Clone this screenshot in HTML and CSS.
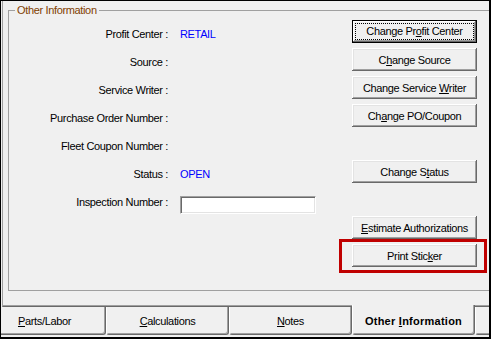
FILE: index.html
```html
<!DOCTYPE html>
<html lang="en">
<head>
  <meta charset="UTF-8">
  <title>Other Information</title>
  <link rel="stylesheet" href="styles.css">
</head>
<body>
  <div class="window">
    <!-- tab page -->
    <div class="page">
      <fieldset class="group">
        <legend>Other Information</legend>
        <div class="form">
          <div class="label">Profit Center :</div>
          <div class="value">RETAIL</div>
          <div class="cell"><button class="btn btn-focus"><span class="focus-ring">Change Pr<u>o</u>fit Center</span></button></div>

          <div class="label">Source :</div>
          <div class="value"></div>
          <div class="cell"><button class="btn">C<u>h</u>ange Source</button></div>

          <div class="label">Service Writer :</div>
          <div class="value"></div>
          <div class="cell"><button class="btn">Change Service <u>W</u>riter</button></div>

          <div class="label">Purchase Order Number :</div>
          <div class="value"></div>
          <div class="cell"><button class="btn">Ch<u>a</u>nge PO/Coupon</button></div>

          <div class="label">Fleet Coupon Number :</div>
          <div class="value"></div>
          <div class="cell"></div>

          <div class="label">Status :</div>
          <div class="value">OPEN</div>
          <div class="cell"><button class="btn">Change S<u>t</u>atus</button></div>

          <div class="label">Inspection Number :</div>
          <div class="value"><input type="text" class="field"></div>
          <div class="cell"></div>

          <div class="label"></div>
          <div class="value"></div>
          <div class="cell"><button class="btn"><u>E</u>stimate Authorizations</button></div>

          <div class="label"></div>
          <div class="value"></div>
          <div class="cell highlight">
            <button class="btn">Print Stic<u>k</u>er</button>
            <div class="callout"></div>
          </div>
        </div>
      </fieldset>
    </div>

    <!-- tabs along the bottom -->
    <div class="tabs">
      <div class="tab"><u>P</u>arts/Labor</div>
      <div class="tab"><u>C</u>alculations</div>
      <div class="tab"><u>N</u>otes</div>
      <div class="tab active">Other <u>I</u>nformation</div>
      <div class="tab"></div>
    </div>
  </div>
</body>
</html>
```

FILE: styles.css
```css
/* ===== reset ===== */
* {
  box-sizing: border-box;
  margin: 0;
  padding: 0;
}

body {
  background: #f0f0f0;
  font-family: "Liberation Sans", Arial, sans-serif;
  font-size: 11px;
  letter-spacing: -0.35px;
  color: #000;
}

/* ===== window frame ===== */
.window {
  width: 491px;
  height: 339px;
  border: 1px solid #000;
  border-right-width: 2px;
  border-bottom-width: 2px;
  background: #f0f0f0;
  overflow: hidden;
}

.page {
  height: 306px;
  margin-left: 1px;
  padding: 3px 0 0 5px;
  border-left: 1px solid #a0a0a0;
  border-bottom: 1px solid #696969;
  box-shadow: inset 0 -1px #a0a0a0;
  overflow: hidden;
}

/* ===== group box ===== */
.group {
  width: 520px;
  height: 287px;
  border: 1px solid #a0a0a0;
  padding: 0;
}
.group legend {
  margin-left: 6px;
  padding: 0 2px;
  line-height: 13px;
  color: #804000;
}

.form {
  display: grid;
  grid-template-columns: 159px 184px 125px;
  grid-auto-rows: 28px;
  margin-top: 3px;
}
.label {
  text-align: right;
  line-height: 28px;
  white-space: nowrap;
}
.value {
  padding-left: 12px;
  line-height: 28px;
  color: #0000ff;
}

.field {
  display: block;
  width: 136px;
  height: 18px;
  margin-top: 8px;
  background: #fff;
  border: 1px solid;
  border-color: #a0a0a0 #fff #fff #a0a0a0;
  box-shadow: inset 1px 1px #696969, inset -1px -1px #e3e3e3;
}

/* ===== buttons ===== */
.btn {
  display: block;
  width: 125px;
  height: 23px;
  background: #f0f0f0;
  border: none;
  font: inherit;
  letter-spacing: inherit;
  color: #000;
  text-align: center;
  box-shadow: inset -1px -1px #696969, inset 1px 1px #fff,
              inset -2px -2px #a0a0a0, inset 2px 2px #e3e3e3;
}
.btn-focus {
  padding: 3px;
  box-shadow: inset 0 0 0 1px #000, inset -2px -2px #696969,
              inset 2px 2px #fff, inset -3px -3px #a0a0a0;
}
.focus-ring {
  display: block;
  height: 100%;
  line-height: 15px;
  border: 1px dotted #000;
}

/* red annotation box */
.highlight {
  position: relative;
}
.callout {
  position: absolute;
  top: -5px;
  left: -13px;
  width: 148px;
  height: 34px;
  border: 3px solid #c00000;
}

/* ===== tabs ===== */
.tabs {
  display: flex;
  height: 30px;
  margin-left: -18px;
}
.tab {
  flex: none;
  width: 123px;
  height: 28px;
  padding-top: 1px;
  line-height: 26px;
  text-align: center;
  background: #f0f0f0;
  border-left: 1px solid #fff;
  border-right: 1px solid #696969;
  border-bottom: 1px solid #696969;
  border-radius: 0 0 3px 3px;
  box-shadow: inset -1px -1px #a0a0a0;
}
.tab.active {
  height: 30px;
  margin-top: -2px;
  padding-top: 4px;
  line-height: 25px;
  font-weight: bold;
  letter-spacing: 0.25px;
}
```
